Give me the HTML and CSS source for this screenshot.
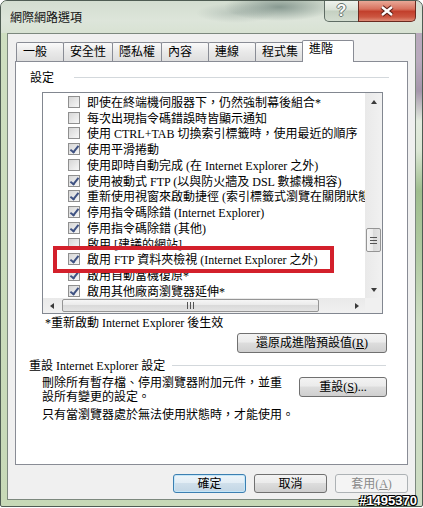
FILE: index.html
```html
<!DOCTYPE html>
<html lang="zh-Hant">
<head>
  <meta charset="UTF-8">
  <title>網際網路選項</title>
  <link rel="stylesheet" href="styles.css">
</head>
<body>

  <div class="window">
    <div class="titlebar">
      <span class="title">網際網路選項</span>
      <div class="caption-btns">
        <span class="cap-btn help">?</span>
        <span class="cap-btn close">
          <svg width="16" height="12" viewBox="0 0 16 12">
            <path d="M3 2 L13 10 M13 2 L3 10" stroke="#5a1e16" stroke-width="4.6" fill="none"/>
            <path d="M3 2 L13 10 M13 2 L3 10" stroke="#fff" stroke-width="2.4" fill="none"/>
          </svg>
        </span>
      </div>
    </div>

    <div class="client">
      <div class="tabs">
        <span class="tab">一般</span>
        <span class="tab">安全性</span>
        <span class="tab">隱私權</span>
        <span class="tab">內容</span>
        <span class="tab">連線</span>
        <span class="tab">程式集</span>
        <span class="tab active">進階</span>
      </div>

      <div class="panel">
        <div class="group-head settings"><span>設定</span><i class="rule"></i></div>

        <div class="listbox">
          <div class="list-view">
            <div class="item"><span class="chk"></span>即使在終端機伺服器下，仍然強制幕後組合*</div>
            <div class="item"><span class="chk"></span>每次出現指令碼錯誤時皆顯示通知</div>
            <div class="item"><span class="chk"></span>使用 CTRL+TAB 切換索引標籤時，使用最近的順序</div>
            <div class="item"><span class="chk on"></span>使用平滑捲動</div>
            <div class="item"><span class="chk"></span>使用即時自動完成 (在 Internet Explorer 之外)</div>
            <div class="item"><span class="chk on"></span>使用被動式 FTP (以與防火牆及 DSL 數據機相容)</div>
            <div class="item"><span class="chk on"></span>重新使用視窗來啟動捷徑 (索引標籤式瀏覽在關閉狀態時)</div>
            <div class="item"><span class="chk on"></span>停用指令碼除錯 (Internet Explorer)</div>
            <div class="item"><span class="chk on"></span>停用指令碼除錯 (其他)</div>
            <div class="item"><span class="chk"></span>啟用 [建議的網站]</div>
            <div class="item"><span class="chk on"></span>啟用 FTP 資料夾檢視 (Internet Explorer 之外)</div>
            <div class="item"><span class="chk on"></span>啟用自動當機復原*</div>
            <div class="item"><span class="chk on"></span>啟用其他廠商瀏覽器延伸*</div>
            <div class="mark"></div>
          </div>
          <div class="vscroll">
            <span class="arrow up"></span>
            <span class="thumb v"></span>
            <span class="arrow down"></span>
          </div>
          <div class="hscroll">
            <span class="arrow left"></span>
            <span class="thumb h"></span>
            <span class="arrow right"></span>
          </div>
          <div class="corner"></div>
        </div>

        <div class="note">*重新啟動 Internet Explorer 後生效</div>
        <div class="btn-row">
          <button class="btn restore">還原成進階預設值(<u>R</u>)</button>
        </div>

        <div class="group-head"><span>重設 Internet Explorer 設定</span><i class="rule"></i></div>
        <div class="reset-row">
          <p>刪除所有暫存檔、停用瀏覽器附加元件，並重<br>設所有變更的設定。</p>
          <button class="btn reset">重設(<u>S</u>)...</button>
        </div>
        <p class="hint">只有當瀏覽器處於無法使用狀態時，才能使用。</p>
      </div>

      <div class="footer">
        <button class="btn default">確定</button>
        <button class="btn">取消</button>
        <button class="btn" disabled>套用(<u>A</u>)</button>
      </div>
    </div>

    <div class="stamp">#1495370</div>
  </div>

</body>
</html>
```

FILE: styles.css
```css
* { box-sizing: border-box; }

body {
  margin: 0;
  background: #fff;
  font-family: "Liberation Serif", "Noto Sans CJK TC", serif;
  font-size: 12px;
  color: #000;
}

.window {
  position: relative;
  width: 423px;
  height: 507px;
  border: 1px solid #4f5c53;
  border-radius: 7px 7px 2px 2px;
  background:
    linear-gradient(#b9aabd 60px, #a596ab 90px, #e2eade 120px, #dbe6d4 150px, #9fbd8e 190px, #b3cca5 260px, #cddcc3 320px) right top / 6px 100% no-repeat,
    linear-gradient(#cfdfc1, #c7d9b7);
}

/* title bar */
.titlebar {
  display: flex;
  height: 32px;
  padding: 0 6px 0 9px;
  border-radius: 6px 6px 0 0;
  background:
    radial-gradient(55px 14px at 278px 6px, rgba(70, 95, 90, .55), transparent),
    radial-gradient(40px 10px at 235px 12px, rgba(110, 130, 125, .3), transparent),
    linear-gradient(#d3ddd0, #dde5da 60%, #d8e2d3);
}
.title {
  align-self: center;
  color: #111;
}
.caption-btns {
  display: flex;
  align-items: flex-start;
  margin-left: auto;
}
.cap-btn {
  display: flex;
  align-items: center;
  justify-content: center;
  height: 21px;
  border: 1px solid #5f6c64;
  border-top: none;
}
.help {
  width: 35px;
  border-radius: 0 0 0 5px;
  background: linear-gradient(#eef2ec, #d9e1d6 45%, #c4d0c1 50%, #d3ddd0);
  font: bold 16px "Liberation Sans", sans-serif;
  color: #fbfbfb;
  text-shadow: -1px 0 #6a7870, 1px 0 #6a7870, 0 -1px #6a7870, 0 1px #6a7870;
}
.close {
  width: 58px;
  margin-left: -1px;
  border-color: #6a2a20;
  border-radius: 0 0 5px 0;
  background: linear-gradient(#e9a897, #d8725f 40%, #c23f2c 52%, #cc5641 80%, #df8c78);
}

/* client area */
.client {
  height: 467px;
  margin: 0 6px;
  border: 1px solid #7c887e;
  background: #f0f0f0;
}

.tabs {
  display: flex;
  align-items: flex-end;
  height: 21px;
  margin-top: 6px;
  padding-left: 8px;
}
.tab {
  height: 19px;
  min-width: 48px;
  padding: 0 6px;
  margin-right: -1px;
  line-height: 18px;
  border: 1px solid #898c95;
  border-bottom: none;
  border-radius: 2px 2px 0 0;
  background: linear-gradient(#fafafa, #e9e9e9 50%, #dedede);
  white-space: nowrap;
}
.tab.active {
  position: relative;
  z-index: 1;
  height: 22px;
  min-width: 52px;
  margin: 0 0 -1px -2px;
  line-height: 16px;
  background: #fff;
}

.panel {
  height: 404px;
  margin: 0 7px;
  border: 1px solid #898c95;
  background: #fff;
}

.group-head {
  display: flex;
  align-items: center;
  height: 16px;
  margin: 4px 21px 0 13px;
  white-space: nowrap;
}
.group-head.settings { margin: 7px 18px 0 14px; }
.group-head .rule {
  flex: 1;
  height: 1px;
  margin-left: 7px;
  background: #d3d8dc;
}
.group-head.settings .rule { margin-left: 20px; }

/* settings list */
.listbox {
  display: grid;
  grid-template-columns: 1fr 17px;
  grid-template-rows: 1fr 15px;
  width: 341px;
  height: 222px;
  margin: 7px 0 0 26px;
  border: 1px solid #828790;
}
.list-view {
  position: relative;
  overflow: hidden;
  padding-top: 1px;
}
.item {
  display: flex;
  align-items: center;
  height: 15.75px;
  padding-left: 25px;
  white-space: nowrap;
}
.chk {
  position: relative;
  flex: none;
  width: 12px;
  height: 12px;
  margin-right: 7px;
  border: 1px solid #8f8f8f;
  background: linear-gradient(135deg, #d6d6d6, #f7f7f7);
}
.chk.on::after {
  content: "";
  position: absolute;
  left: 3px;
  top: 0;
  width: 3px;
  height: 7px;
  border: solid #3f5283;
  border-width: 0 2px 2px 0;
  transform: rotate(38deg);
}
.mark {
  position: absolute;
  left: 10px;
  top: 153px;
  width: 281px;
  height: 27px;
  border: 4px solid #d3202b;
}

.vscroll, .hscroll {
  display: flex;
  background: linear-gradient(to right, #e9e9e9, #f1f1f1);
}
.vscroll { flex-direction: column; }
.hscroll { background: linear-gradient(#e9e9e9, #f1f1f1); }
.corner { background: #f0f0f0; }

.arrow {
  display: flex;
  align-items: center;
  justify-content: center;
  flex: none;
  width: 17px;
  height: 17px;
}
.hscroll .arrow { height: 15px; }
.arrow::before {
  content: "";
  border: 0 solid transparent;
}
.arrow.up::before { border-width: 0 3.5px 4px; border-bottom-color: #3a3a3a; }
.arrow.down::before { border-width: 4px 3.5px 0; border-top-color: #3a3a3a; }
.arrow.left::before { border-width: 3.5px 4px 3.5px 0; border-right-color: #3a3a3a; }
.arrow.right::before { border-width: 3.5px 0 3.5px 4px; border-left-color: #3a3a3a; }
.arrow.down, .arrow.right { margin: auto 0 0 0; }
.arrow.right { margin: 0 0 0 auto; }

.thumb {
  display: flex;
  align-items: center;
  justify-content: center;
  border: 1px solid #959595;
  border-radius: 2px;
}
.thumb.v {
  height: 24px;
  margin: 118px 1px 0;
  background: linear-gradient(to right, #f6f6f6, #e9e9e9 50%, #dadada 50%, #e4e4e4);
}
.thumb.v::after {
  content: "";
  width: 7px;
  height: 7px;
  background: repeating-linear-gradient(#555 0 1px, transparent 1px 3px);
}
.thumb.h {
  width: 257px;
  margin: 1px 0 1px 2px;
  background: linear-gradient(#f6f6f6, #e9e9e9 50%, #dadada 50%, #e4e4e4);
}
.thumb.h::after {
  content: "";
  width: 7px;
  height: 7px;
  background: repeating-linear-gradient(to right, #555 0 1px, transparent 1px 3px);
}

/* lower part of the panel */
.note {
  margin: 2px 0 0 29px;
  line-height: 15px;
}
.btn-row {
  display: flex;
  justify-content: flex-end;
  margin: 2px 20px 0 0;
}
.reset-row {
  display: flex;
  justify-content: space-between;
  align-items: flex-start;
  margin: 3px 20px 0 26px;
}
.reset-row p, .hint {
  margin: 0;
  line-height: 14px;
  white-space: nowrap;
}
.hint { margin: 4px 0 0 26px; }

.btn {
  height: 20px;
  padding: 0;
  font: inherit;
  line-height: 17px;
  color: #000;
  border: 1px solid #707070;
  border-radius: 3px;
  background: linear-gradient(#f3f3f3, #ebebeb 45%, #dddddd 50%, #cfcfcf);
}
.btn u { text-underline-offset: 1px; }
.btn.restore { width: 150px; }
.btn.reset { width: 88px; margin-top: 1px; }
.btn.default {
  border-color: #3c7fb1;
  background: linear-gradient(#eef5fa, #e2edf5 45%, #cfdfeb 50%, #c2d6e5);
  box-shadow: inset 0 0 0 1px #c4e6f8;
}
.btn:disabled {
  color: #8a8a8a;
  border-color: #adb2b5;
  background: #f4f4f4;
}

.footer {
  display: flex;
  justify-content: flex-end;
  gap: 8px;
  margin: 9px 7px 0 0;
}
.footer .btn {
  width: 73px;
  height: 19px;
  line-height: 16px;
}

.stamp {
  position: absolute;
  right: 5px;
  bottom: -2px;
  font: bold 13px "Liberation Sans", sans-serif;
  color: #fff;
  text-shadow: -1px -1px 0 #000, 1px -1px 0 #000, -1px 1px 0 #000, 1px 1px 0 #000;
}
```
